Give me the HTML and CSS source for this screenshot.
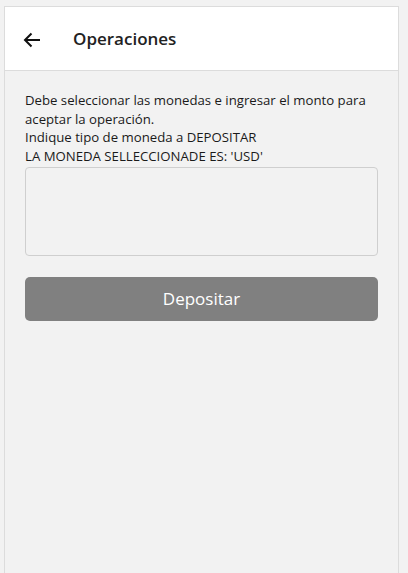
FILE: index.html
```html
<!DOCTYPE html>
<html lang="es">
<head>
<meta charset="utf-8">
<link rel="stylesheet" href="styles.css">
</head>
<body>
<div class="panel">
  <header class="header">
    <svg class="back" width="18" height="16" viewBox="0 0 18 16"><path d="M17 8H2M8.5 1.5L2 8l6.5 6.5" fill="none" stroke="#111" stroke-width="2"/></svg>
    <h1 class="title">Operaciones</h1>
  </header>
  <main class="content">
    <p class="info">Debe seleccionar las monedas e ingresar el monto para aceptar la operación.<br>Indique tipo de moneda a DEPOSITAR<br>LA MONEDA SELLECCIONADE ES: 'USD'</p>
    <div class="box"></div>
    <button class="btn">Depositar</button>
  </main>
</div>
</body>
</html>
```
FILE: styles.css
```css
html, body { margin: 0; padding: 0; background: #f2f2f2; }
body { font-family: "Open Sans", "Noto Sans", sans-serif; color: #1a1a1a; padding: 6px 9px 0 4px; height: 573px; box-sizing: border-box; }
.panel { border: 1px solid #dcdcdc; border-bottom: none; height: 100%; box-sizing: border-box; background: #f2f2f2; }
.header { background: #fff; height: 63px; border-bottom: 1px solid #dcdcdc; display: flex; align-items: center; padding-left: 18px; box-sizing: content-box; }
.back { display: block; margin-top: 2px; }
.title { margin: 0 0 0 32px; font-size: 17px; font-weight: 600; color: #222; }
.content { padding: 20px 20px 0 20px; }
.info { margin: 0; font-size: 13.2px; line-height: 18.7px; color: #1a1a1a; }
.box { margin-top: 1px; height: 87px; border: 1px solid #cfcfcf; border-radius: 4px; }
.btn { display: block; width: 100%; margin-top: 21px; height: 44px; border: none; border-radius: 5px; background: #808080; color: #fff; font-family: inherit; font-size: 17px; }
```
